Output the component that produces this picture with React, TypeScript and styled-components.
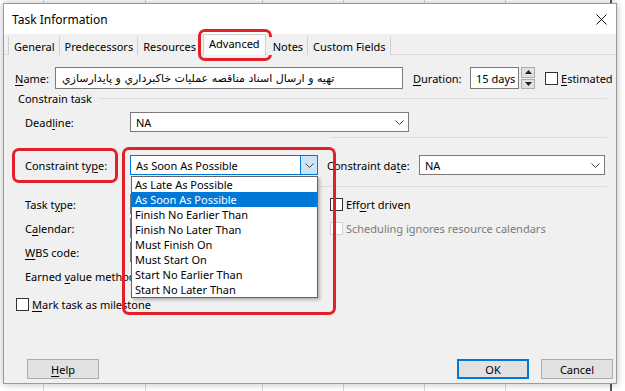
import styled, { createGlobalStyle, css } from 'styled-components';

const FONT = `"Noto Sans", "Segoe UI", "DejaVu Sans", sans-serif`;

const GlobalStyle = createGlobalStyle`
  html, body { margin: 0; padding: 0; background: #fff; }
  body { font-family: ${FONT}; font-size: 11px; color: #000; }
  * { box-sizing: border-box; }
  u { text-decoration-thickness: 1px; text-underline-offset: 2px; }
`;

const gridLine = (x: number, color = '#d6d6d6', w = 1) =>
  `linear-gradient(to right, transparent ${x}px, ${color} ${x}px, ${color} ${x + w}px, transparent ${x + w}px)`;

const Page = styled.div`
  width: 625px;
  height: 391px;
  overflow: hidden;
  padding: 3px 0 0 3px;
  background-color: #fff;
  background-image: ${[43, 145, 262, 343, 424, 505].map((x) => gridLine(x)).join(', ')},
    ${gridLine(610, '#555', 2)};
`;

const Dialog = styled.div`
  width: 614px;
  height: 381px;
  background: #f0f0f0;
  border: 1px solid #9a9a9a;
  box-shadow: 0 0 7px rgba(0, 0, 0, 0.28);
  display: flex;
  flex-direction: column;
  position: relative;
`;

const TitleBar = styled.div`
  height: 30px;
  background: #fff;
  display: flex;
  align-items: center;
  justify-content: space-between;
  padding: 0 9px 0 8px;
  font-size: 12px;
`;

const CloseBtn = styled.div`
  width: 12px;
  height: 12px;
  display: flex;
  align-items: center;
  justify-content: center;
`;

const redFrame = css`
  content: '';
  position: absolute;
  border: 3px solid #e3202a;
  border-radius: 7px;
  pointer-events: none;
`;

const TabStrip = styled.div`
  height: 21px;
  display: flex;
  align-items: flex-end;
  padding-left: 4px;
  border-bottom: 1px solid #d9d9d9;
`;

const Tab = styled.div<{ $active?: boolean }>`
  position: relative;
  height: 18px;
  padding: 0 4px 0 5px;
  display: flex;
  align-items: center;
  border-right: 1px solid #d0d0d0;
  background: #f0f0f0;
  white-space: nowrap;
  margin-bottom: -1px;
  &:first-child { border-left: 1px solid #d0d0d0; }
  ${(p) =>
    p.$active &&
    css`
      height: 21px;
      margin: 0 2px -1px 2px;
      padding: 0 5px 3px 5px;
      background: #fbfbfb;
      border: 1px solid #d0d0d0;
      border-bottom: none;
      &::after {
        ${redFrame};
        top: -6px;
        left: -6px;
        right: -7px;
        bottom: -6px;
      }
    `}
`;

const Body = styled.div`
  flex: 1;
  display: flex;
  flex-direction: column;
  padding: 12px 0 0 11px;
`;

const Row = styled.div<{ $h?: number; $mt?: number }>`
  display: flex;
  align-items: center;
  height: ${(p) => p.$h ?? 24}px;
  margin-top: ${(p) => p.$mt ?? 0}px;
  white-space: nowrap;
`;

const Label = styled.div<{ $w?: number; $ml?: number; $disabled?: boolean }>`
  width: ${(p) => (p.$w ? `${p.$w}px` : 'auto')};
  margin-left: ${(p) => p.$ml ?? 0}px;
  flex-shrink: 0;
  color: ${(p) => (p.$disabled ? '#7a7a7a' : '#000')};
  white-space: nowrap;
`;

const TextBox = styled.div<{ $w: number; $h?: number; $rtl?: boolean }>`
  width: ${(p) => p.$w}px;
  height: ${(p) => p.$h ?? 22}px;
  flex-shrink: 0;
  background: #fff;
  border: 1px solid #7a7a7a;
  display: flex;
  align-items: center;
  padding: 0 5px;
  overflow: hidden;
  white-space: nowrap;
  ${(p) =>
    p.$rtl &&
    css`
      direction: rtl;
      justify-content: flex-end;
      padding: 0 6px;
      font-family: "DejaVu Sans", ${FONT};
      font-size: 11px;
    `}
`;

const Spinner = styled.div`
  width: 14px;
  height: 22px;
  margin-left: 2px;
  display: flex;
  flex-direction: column;
  gap: 1px;
`;

const SpinButton = styled.div`
  flex: 1;
  background: #e1e1e1;
  border: 1px solid #adadad;
  display: flex;
  align-items: center;
  justify-content: center;
`;

const Check = styled.div<{ $disabled?: boolean; $ml?: number }>`
  width: 13px;
  height: 13px;
  flex-shrink: 0;
  margin-left: ${(p) => p.$ml ?? 0}px;
  margin-right: 3px;
  background: #fff;
  border: 1px solid ${(p) => (p.$disabled ? '#d2d2d2' : '#333')};
`;

const GroupHeader = styled.div`
  display: flex;
  align-items: center;
  gap: 6px;
  height: 14px;
  margin-top: 2px;
  padding-left: 3px;
  padding-right: 9px;
  &::after {
    content: '';
    flex: 1;
    border-top: 1px solid #dcdcdc;
  }
`;

const Section = styled.div`
  display: flex;
  flex-direction: column;
  padding-left: 10px;
`;

const Divider = styled.div<{ $mt: number }>`
  height: 1px;
  margin: ${(p) => p.$mt}px 9px 0 305px;
  background: #dcdcdc;
`;

const Combo = styled.div<{ $w: number; $focused?: boolean }>`
  position: relative;
  width: ${(p) => p.$w}px;
  height: 20px;
  flex-shrink: 0;
  background: #fff;
  border: 1px solid ${(p) => (p.$focused ? '#0078d7' : '#7a7a7a')};
  display: flex;
  align-items: center;
`;

const ComboText = styled.div`
  flex: 1;
  padding-left: 5px;
  overflow: hidden;
  white-space: nowrap;
`;

const ComboArrow = styled.div<{ $focused?: boolean }>`
  width: 17px;
  height: 100%;
  display: flex;
  align-items: center;
  justify-content: center;
  ${(p) =>
    p.$focused &&
    css`
      background: #cce4f7;
      border-left: 1px solid #0078d7;
    `}
`;

const LabelMark = styled.div`
  position: relative;
  width: 105px;
  flex-shrink: 0;
  &::after {
    ${redFrame};
    top: -10px;
    bottom: -10px;
    left: -13px;
    width: 100px;
  }
`;

const ComboMark = styled.div`
  position: relative;
  &::after {
    ${redFrame};
    top: -8px;
    left: -8px;
    width: 208px;
    height: 162px;
    z-index: 3;
  }
`;

const DropList = styled.div`
  position: absolute;
  top: 20px;
  left: 0;
  width: 187px;
  background: #fff;
  border: 1px solid #646464;
  box-shadow: 2px 2px 3px rgba(0, 0, 0, 0.25);
  z-index: 2;
`;

const DropItem = styled.div<{ $selected?: boolean }>`
  height: 15px;
  line-height: 15px;
  padding-left: 3px;
  white-space: nowrap;
  background: ${(p) => (p.$selected ? '#0078d7' : '#fff')};
  color: ${(p) => (p.$selected ? '#fff' : '#000')};
`;

const Footer = styled.div`
  margin-top: auto;
  display: flex;
  align-items: center;
  padding: 0 3px 4px 12px;
  gap: 12px;
`;

const Button = styled.div<{ $default?: boolean }>`
  width: 72px;
  height: 20px;
  display: flex;
  align-items: center;
  justify-content: center;
  background: #e1e1e1;
  border: 1px solid #adadad;
  ${(p) => p.$default && css`border: 2px solid #0078d7;`}
`;

const Spacer = styled.div`
  flex: 1;
`;

const Chevron = () => (
  <svg width="9" height="5" viewBox="0 0 9 5">
    <path d="M0.5 0.5 L4.5 4.5 L8.5 0.5" fill="none" stroke="#404040" strokeWidth="1" />
  </svg>
);

const Triangle = ({ up }: { up?: boolean }) => (
  <svg width="7" height="4" viewBox="0 0 7 4">
    <path d={up ? 'M0 4 L3.5 0 L7 4 Z' : 'M0 0 L3.5 4 L7 0 Z'} fill="#222" />
  </svg>
);

const tabs = ['General', 'Predecessors', 'Resources', 'Advanced', 'Notes', 'Custom Fields'];
const constraints = [
  'As Late As Possible',
  'As Soon As Possible',
  'Finish No Earlier Than',
  'Finish No Later Than',
  'Must Finish On',
  'Must Start On',
  'Start No Earlier Than',
  'Start No Later Than',
];

export default function App() {
  return (
    <Page>
      <GlobalStyle />
      <Dialog>
        <TitleBar>
          <span>Task Information</span>
          <CloseBtn>
            <svg width="11" height="11" viewBox="0 0 11 11">
              <path d="M0.5 0.5 L10.5 10.5 M10.5 0.5 L0.5 10.5" stroke="#111" strokeWidth="1" />
            </svg>
          </CloseBtn>
        </TitleBar>
        <TabStrip>
          {tabs.map((t) => (
            <Tab key={t} $active={t === 'Advanced'}>
              {t}
            </Tab>
          ))}
        </TabStrip>
        <Body>
          <Row $h={22}>
            <Label $w={40}>
              <u>N</u>ame:
            </Label>
            <TextBox $w={348} $rtl>
              تهیه و ارسال اسناد مناقصه عملیات خاکبرداري و پایدارسازي
            </TextBox>
            <Label $w={57} $ml={10}>
              <u>D</u>uration:
            </Label>
            <TextBox $w={49}>15 days</TextBox>
            <Spinner>
              <SpinButton>
                <Triangle up />
              </SpinButton>
              <SpinButton>
                <Triangle />
              </SpinButton>
            </Spinner>
            <Check $ml={10} />
            <Label>
              <u>E</u>stimated
            </Label>
          </Row>
          <GroupHeader>Constrain task</GroupHeader>
          <Section>
            <Row $h={20} $mt={7}>
              <Label $w={105}>
                Dead<u>l</u>ine:
              </Label>
              <Combo $w={279}>
                <ComboText>NA</ComboText>
                <ComboArrow>
                  <Chevron />
                </ComboArrow>
              </Combo>
            </Row>
            <Divider $mt={5} />
            <Row $h={20} $mt={17}>
              <LabelMark>
                Constraint ty<u>p</u>e:
              </LabelMark>
              <ComboMark>
                <Combo $w={188} $focused>
                  <ComboText>As Soon As Possible</ComboText>
                  <ComboArrow $focused>
                    <Chevron />
                  </ComboArrow>
                  <DropList>
                    {constraints.map((c) => (
                      <DropItem key={c} $selected={c === 'As Soon As Possible'}>
                        {c}
                      </DropItem>
                    ))}
                  </DropList>
                </Combo>
              </ComboMark>
              <Label $w={92} $ml={9}>
                Constraint da<u>t</u>e:
              </Label>
              <Combo $w={186}>
                <ComboText>NA</ComboText>
                <ComboArrow>
                  <Chevron />
                </ComboArrow>
              </Combo>
            </Row>
          </Section>
          <Divider $mt={11} />
          <Section>
            <Row $mt={5}>
              <Label $w={105}>
                Task t<u>y</u>pe:
              </Label>
              <Combo $w={188}>
                <ComboText />
                <ComboArrow>
                  <Chevron />
                </ComboArrow>
              </Combo>
              <Check $ml={12} />
              <Label>
                Eff<u>o</u>rt driven
              </Label>
            </Row>
            <Row>
              <Label $w={105}>
                C<u>a</u>lendar:
              </Label>
              <Combo $w={188}>
                <ComboText />
                <ComboArrow>
                  <Chevron />
                </ComboArrow>
              </Combo>
              <Check $ml={12} $disabled />
              <Label $disabled>
                Schedulin<u>g</u> ignores resource calendars
              </Label>
            </Row>
            <Row>
              <Label $w={105}>
                <u>W</u>BS code:
              </Label>
              <TextBox $w={188} $h={20} />
            </Row>
            <Row>
              <Label>
                Earned <u>v</u>alue method:
              </Label>
            </Row>
          </Section>
          <Row $h={16} $mt={8}>
            <Check $ml={1} />
            <Label>
              <u>M</u>ark task as milestone
            </Label>
          </Row>
          <Footer>
            <Button>
              <span>
                <u>H</u>elp
              </span>
            </Button>
            <Spacer />
            <Button $default>OK</Button>
            <Button>Cancel</Button>
          </Footer>
        </Body>
      </Dialog>
    </Page>
  );
}
